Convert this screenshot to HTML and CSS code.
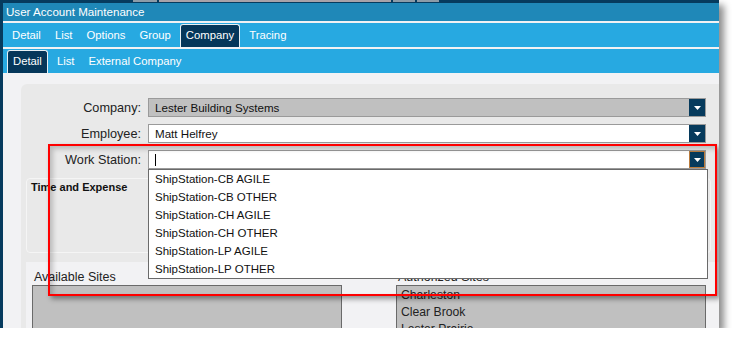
FILE: index.html
```html
<!DOCTYPE html>
<html lang="en">
<head>
  <meta charset="UTF-8">
  <title>User Account Maintenance</title>
  <link rel="stylesheet" href="styles.css">
</head>
<body>
  <div class="window">
    <div class="topstrip">
      <span class="seg seg-a"></span>
      <span class="seg seg-b"></span>
      <span class="seg seg-c"></span>
      <span class="seg seg-d"></span>
    </div>
    <div class="titlebar">User Account Maintenance</div>
    <nav class="tabs">
      <span class="tab">Detail</span>
      <span class="tab">List</span>
      <span class="tab">Options</span>
      <span class="tab">Group</span>
      <span class="tab active">Company</span>
      <span class="tab">Tracing</span>
    </nav>
    <nav class="tabs">
      <span class="tab active">Detail</span>
      <span class="tab">List</span>
      <span class="tab">External Company</span>
    </nav>

    <div class="content">
      <div class="panel">
        <div class="form">
          <div class="row">
            <label>Company:</label>
            <div class="select disabled">
              <span class="value">Lester Building Systems</span>
              <span class="arrow"><svg width="7" height="4" viewBox="0 0 7 4"><polygon points="0,0 7,0 3.5,4" fill="#fff"/></svg></span>
            </div>
          </div>
          <div class="row">
            <label>Employee:</label>
            <div class="select">
              <span class="value">Matt Helfrey</span>
              <span class="arrow"><svg width="7" height="4" viewBox="0 0 7 4"><polygon points="0,0 7,0 3.5,4" fill="#fff"/></svg></span>
            </div>
          </div>
          <div class="row">
            <label>Work Station:</label>
            <div class="select open">
              <span class="value"><span class="caret"></span></span>
              <span class="arrow focus"><svg width="7" height="4" viewBox="0 0 7 4"><polygon points="0,0 7,0 3.5,4" fill="#fff"/></svg></span>
              <ul class="options">
                <li>ShipStation-CB AGILE</li>
                <li>ShipStation-CB OTHER</li>
                <li>ShipStation-CH AGILE</li>
                <li>ShipStation-CH OTHER</li>
                <li>ShipStation-LP AGILE</li>
                <li>ShipStation-LP OTHER</li>
              </ul>
            </div>
          </div>
        </div>

        <div class="subpanel">
          <h3>Time and Expense</h3>
        </div>

        <div class="sites">
          <div class="site-col">
            <div class="site-label">Available Sites</div>
            <div class="site-box"></div>
          </div>
          <div class="site-col">
            <div class="site-label">Authorized Sites</div>
            <div class="site-box">
              <div class="site">Charleston</div>
              <div class="site">Clear Brook</div>
              <div class="site">Lester Prairie</div>
            </div>
          </div>
        </div>
      </div>
    </div>

    <div class="highlight"></div>
  </div>
</body>
</html>
```

FILE: styles.css
```css
body {
  margin: 0;
  background: #fff;
  font-family: 'Liberation Sans', Arial, sans-serif;
}
.window {
  position: relative;
  width: 716px;
  height: 328px;
  border-left: 3px solid #063b5e;
  background: #f2f2f4;
  overflow: hidden;
  box-shadow: 5px 5px 7px rgba(0, 0, 0, 0.45);
}
.topstrip {
  display: flex;
  height: 3px;
  background: #063b5e;
}
.seg {
  height: 2px;
  background: #8c9ba7;
  margin-right: 2px;
}
.seg-a { margin-left: 130px; width: 24px; }
.seg-b { width: 232px; background: #a8a2a8; }
.seg-c { width: 22px; }
.seg-d { width: 22px; }
.titlebar {
  height: 18px;
  line-height: 18px;
  background: #1f88b8;
  color: #fff;
  font-size: 11.6px;
  padding-left: 3px;
  border-bottom: 2px solid #f2f2f4;
}
.tabs {
  display: flex;
  gap: 4px;
  height: 24px;
  padding-left: 4px;
  background: #27a9e1;
  border-bottom: 2px solid #f2f2f4;
}
.tabs + .tabs {
  border-bottom: none;
}
.tab {
  padding: 0 5px;
  line-height: 25px;
  color: #fff;
  font-size: 11.3px;
}
.tab.active {
  margin-top: 1px;
  line-height: 20px;
  background: #05375a;
  border: 1px solid #e8f0f4;
  border-bottom: none;
  border-radius: 3px 3px 0 0;
}
.content {
  padding: 11px 0 0 18px;
}
.panel {
  background: #e9e9e9;
  border-radius: 6px 0 0 0;
  padding: 14px 0 0 5px;
  height: 240px;
}
.form {
  display: flex;
  flex-direction: column;
  gap: 7px;
}
.row {
  display: flex;
  align-items: center;
  gap: 7px;
}
.row label {
  width: 115px;
  text-align: right;
  font-size: 12.7px;
  color: #222;
}
.select {
  position: relative;
  display: flex;
  align-items: center;
  flex: 1;
  margin-right: 13px;
  height: 17px;
  background: #fff;
  border: 1px solid #9a9a9a;
  font-size: 11.6px;
  color: #111;
}
.select.disabled {
  background: #c0c0c0;
}
.value {
  flex: 1;
  padding-left: 6px;
}
.caret {
  display: inline-block;
  width: 1px;
  height: 12px;
  background: #000;
  vertical-align: middle;
}
.arrow {
  display: flex;
  align-items: center;
  justify-content: center;
  width: 16px;
  height: 17px;
  background: #063a5c;
}
.arrow.focus {
  box-sizing: border-box;
  border: 1px solid #b97b3d;
}
.options {
  position: absolute;
  top: 18px;
  left: -1px;
  width: 558px;
  margin: 0;
  padding: 0;
  list-style: none;
  background: #fff;
  border: 1px solid #6a6a6a;
  z-index: 2;
}
.options li {
  height: 18px;
  line-height: 18px;
  padding-left: 6px;
  font-size: 11.5px;
  color: #111;
}
.subpanel {
  margin: 9px 8px 0 0;
  height: 73px;
  background: #e9e9e9;
  border: 1px solid #f5f5f5;
  border-radius: 4px;
}
.subpanel h3 {
  margin: 0;
  padding: 2px 0 0 4px;
  font-size: 11px;
  font-weight: bold;
  color: #111;
}
.sites {
  display: flex;
  gap: 54px;
  margin-top: 9px;
  padding: 8px 0 0 6px;
  height: 80px;
  background: #f2f2f4;
}
.site-col {
  width: 310px;
}
.site-label {
  height: 15px;
  line-height: 15px;
  padding-left: 2px;
  font-size: 12.5px;
  color: #222;
}
.site-box {
  height: 60px;
  padding-top: 1px;
  background: #c0c0c0;
  border: 1px solid #6a6a6a;
}
.site {
  height: 17px;
  line-height: 17px;
  padding-left: 4px;
  font-size: 12.2px;
  color: #222;
}
.highlight {
  position: absolute;
  left: 45px;
  top: 144px;
  width: 665px;
  height: 148px;
  border: 2px solid #f00;
  box-shadow: 3px 3px 5px rgba(0, 0, 0, 0.4), inset 3px 3px 5px rgba(0, 0, 0, 0.2);
  z-index: 3;
}
```
